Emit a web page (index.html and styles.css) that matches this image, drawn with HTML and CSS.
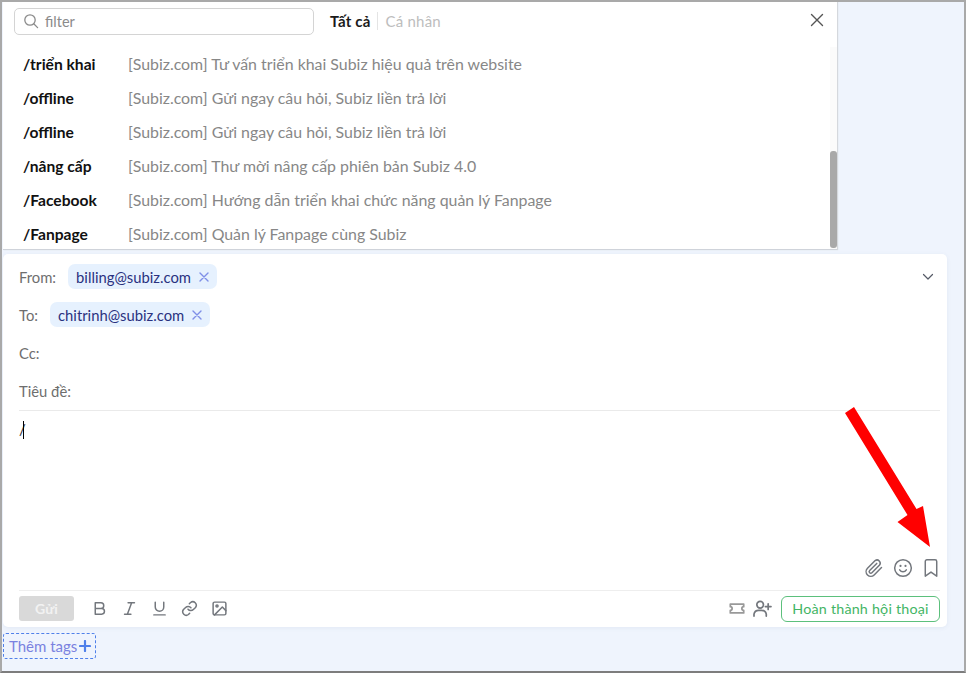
FILE: index.html
```html
<!DOCTYPE html>
<html lang="en">
<head>
    <meta charset="UTF-8">
    <title>Subiz composer</title>
    <link rel="stylesheet" href="styles.css">
</head>
<body>
    <div class="frame">
        <div class="template-box">
            <div class="template-head">
                <div class="filter">
                    <svg class="filter-icon" width="16" height="16" viewBox="0 0 16 16"><circle cx="7" cy="7" r="5.2"/><path d="M11 11l3.6 3.6"/></svg>
                    <span>filter</span>
                </div>
                <div class="tabs">
                    <span class="tab active">Tất cả</span>
                    <span class="tab">Cá nhân</span>
                </div>
                <svg class="close-icon" width="14" height="14" viewBox="0 0 14 14"><path d="M1.5 1.5l11 11M12.5 1.5l-11 11"/></svg>
            </div>
            <div class="template-body">
                <div class="template-list">
                    <div class="row"><b>/triển khai</b><span>[Subiz.com] Tư vấn triển khai Subiz hiệu quả trên website</span></div>
                    <div class="row"><b>/offline</b><span>[Subiz.com] Gửi ngay câu hỏi, Subiz liền trả lời</span></div>
                    <div class="row"><b>/offline</b><span>[Subiz.com] Gửi ngay câu hỏi, Subiz liền trả lời</span></div>
                    <div class="row"><b>/nâng cấp</b><span>[Subiz.com] Thư mời nâng cấp phiên bản Subiz 4.0</span></div>
                    <div class="row"><b>/Facebook</b><span>[Subiz.com] Hướng dẫn triển khai chức năng quản lý Fanpage</span></div>
                    <div class="row"><b>/Fanpage</b><span>[Subiz.com] Quản lý Fanpage cùng Subiz</span></div>
                </div>
                <div class="scrollbar"><div class="thumb"></div></div>
            </div>
        </div>

        <div class="composer">
            <div class="field">
                <label>From:</label>
                <span class="chip">billing@subiz.com <svg width="10" height="10" viewBox="0 0 10 10"><path d="M1 1l8 8M9 1l-8 8"/></svg></span>
                <svg class="chevron" width="12" height="8" viewBox="0 0 12 8"><path d="M1.5 1.5L6 6l4.5-4.5"/></svg>
            </div>
            <div class="field">
                <label>To:</label>
                <span class="chip">chitrinh@subiz.com <svg width="10" height="10" viewBox="0 0 10 10"><path d="M1 1l8 8M9 1l-8 8"/></svg></span>
            </div>
            <div class="field"><label>Cc:</label></div>
            <div class="field"><label>Tiêu đề:</label></div>
            <div class="editor">
                <div class="typed">/<i class="caret"></i></div>
                <div class="editor-icons">
                    <svg width="20" height="20" viewBox="0 0 24 24"><path d="M21 11.5l-8.8 8.8a5.6 5.6 0 0 1-8-8l9.2-9.2a3.8 3.8 0 0 1 5.3 5.3l-9.2 9.2a1.9 1.9 0 0 1-2.7-2.7l8.5-8.4"/></svg>
                    <svg width="20" height="20" viewBox="0 0 24 24"><circle cx="12" cy="12" r="10"/><path d="M8 14.2s1.500 2.300 4 2.300 4-2.300 4-2.300"/><path d="M9 9.500h.01M15 9.500h.01" stroke-width="2.600"/></svg>
                    <svg width="18" height="20" viewBox="0 0 22 24"><path d="M18 22l-7-5-7 5V4a2 2 0 0 1 2-2h10a2 2 0 0 1 2 2z"/></svg>
                </div>
            </div>
            <div class="toolbar">
                <button class="send">Gửi</button>
                <div class="format-icons">
                    <svg width="17" height="17" viewBox="0 0 24 24"><path d="M6 4h8a4 4 0 0 1 0 8H6zM6 12h9a4 4 0 0 1 0 8H6z"/></svg>
                    <svg width="17" height="17" viewBox="0 0 24 24"><path d="M19 4h-9M14 20H5M15 4L9 20"/></svg>
                    <svg width="17" height="17" viewBox="0 0 24 24"><path d="M6 3v7a6 6 0 0 0 12 0V3M4 21h16"/></svg>
                    <svg width="17" height="17" viewBox="0 0 24 24"><path d="M10 13a5 5 0 0 0 7.500.500l3-3a5 5 0 0 0-7-7l-1.700 1.700"/><path d="M14 11a5 5 0 0 0-7.500-.500l-3 3a5 5 0 0 0 7 7l1.700-1.700"/></svg>
                    <svg width="17" height="17" viewBox="0 0 24 24"><rect x="3" y="3" width="18" height="18" rx="2"/><circle cx="8.500" cy="8.500" r="1.500"/><path d="M21 15l-5-5L5 21"/></svg>
                </div>
                <div class="actions">
                    <svg class="ticket" width="16" height="13" viewBox="0 0 18 14"><path d="M1.500 2h15v3a2 2 0 0 0 0 4v3h-15V9a2 2 0 0 0 0-4z"/></svg>
                    <svg width="19" height="17" viewBox="0 0 20 18"><circle cx="7.500" cy="5" r="3.500"/><path d="M1 17v-2a5 5 0 0 1 5-4h3a5 5 0 0 1 5 4v2M16 4v6M13 7h6"/></svg>
                    <button class="finish">Hoàn thành hội thoại</button>
                </div>
            </div>
        </div>

        <div class="tags-row">
            <span class="add-tags">Thêm tags<svg width="12" height="12" viewBox="0 0 12 12"><path d="M6 1v10M1 6h10"/></svg></span>
        </div>

        <svg class="arrow" width="100" height="150" viewBox="0 0 100 150"><path d="M5 13L14 7L76.500 109L83 106L90 147L57.500 122L67.500 115z"/></svg>
    </div>
</body>
</html>
```

FILE: styles.css
```css
* {
    box-sizing: border-box;
}

body {
    margin: 0;
    font-family: Lato, "Open Sans", sans-serif;
    background-color: #eff4fd;
}

.frame {
    position: relative;
    width: 966px;
    height: 673px;
    border-top: 2px solid #a9a9a9;
    border-left: 2px solid #a9a9a9;
    border-right: 2px solid #a9a9a9;
    border-bottom: 2px solid #7d7d7d;
    padding-left: 1px;
    overflow: hidden;
}

svg {
    fill: none;
    stroke: #73777d;
    stroke-width: 1.8;
    stroke-linecap: round;
    stroke-linejoin: round;
    flex: none;
}

/* template popup */
.template-box {
    width: 834px;
    height: 248px;
    background-color: #fff;
    border-bottom: 1px solid #cfd3da;
    box-shadow: 1px 0 1px #d5d8dd;
}

.template-head {
    display: flex;
    align-items: center;
    height: 45px;
    padding: 6px 0 13px 11px;
}

.filter {
    display: flex;
    align-items: center;
    gap: 6px;
    width: 300px;
    height: 27px;
    padding-left: 8px;
    border: 1px solid #d4d4d4;
    border-radius: 5px;
    font-size: 14.500px;
    color: #8b8b8b;
}

.filter-icon {
    stroke: #8b8b8b;
    stroke-width: 1.300;
}

.tabs {
    display: flex;
    align-items: center;
    margin-left: 16px;
    font-size: 15px;
    letter-spacing: .2px;
}

.tab {
    color: #bdbdbd;
}

.tab.active {
    padding-right: 6px;
    margin-right: 8px;
    border-right: 1px solid #e4e4e4;
    color: #1b1b1b;
    font-weight: bold;
}

.close-icon {
    margin-left: auto;
    margin-right: 13px;
    margin-top: -2px;
    stroke: #555;
    stroke-width: 1.400;
}

.template-body {
    display: flex;
    height: 202px;
}

.template-list {
    flex: 1;
    padding-left: 20px;
}

.row {
    display: flex;
    align-items: center;
    height: 34px;
    font-size: 15.900px;
    color: #878787;
}

.row span {
    margin-bottom: 2px;
}

.row b {
    width: 105px;
    flex: none;
    font-size: 15.600px;
    color: #111;
}

.scrollbar {
    width: 7px;
    padding-top: 104px;
    background-color: #fbfbfb;
}

.thumb {
    height: 97px;
    border-radius: 3px;
    background-color: #a9a9a9;
}

/* composer */
.composer {
    display: flex;
    flex-direction: column;
    width: 944px;
    height: 373px;
    margin-top: 4px;
    padding: 4px 7px 0 16px;
    background-color: #fff;
    border-radius: 5px;
    box-shadow: 0 1px 4px rgba(80, 100, 140, .08);
}

.field {
    display: flex;
    align-items: center;
    height: 38px;
    font-size: 14.800px;
    color: #6e6e6e;
}

.field label {
    margin-right: 12px;
}

.chip {
    display: flex;
    align-items: center;
    gap: 8px;
    height: 25px;
    margin-bottom: 1px;
    padding: 0 8px;
    border-radius: 7px;
    background-color: #e6f1fe;
    font-size: 14.800px;
    color: #2a3180;
}

.chip svg {
    stroke: #7f8fe8;
    stroke-width: 1.400;
}

.chevron {
    margin-left: auto;
    margin-right: 6px;
    stroke: #555a66;
    stroke-width: 1.200;
}

.editor {
    display: flex;
    flex-direction: column;
    justify-content: space-between;
    height: 180px;
    border-top: 1px solid #eaeaea;
    padding-bottom: 12px;
}

.typed {
    position: relative;
    padding-top: 9px;
    font-size: 15px;
    color: #333;
}

.caret {
    position: absolute;
    left: 4px;
    top: 10px;
    width: 1px;
    height: 18px;
    background-color: #000;
}

.editor-icons {
    display: flex;
    justify-content: flex-end;
    align-items: center;
    gap: 9px;
}

.toolbar {
    display: flex;
    align-items: center;
    height: 36px;
    border-top: 1px solid #eeeeee;
}

.send {
    width: 55px;
    height: 25px;
    border: none;
    border-radius: 3px;
    background-color: #d9d9d9;
    color: #f2f2f2;
    font-family: inherit;
    font-size: 14px;
    font-weight: bold;
}

.format-icons {
    display: flex;
    gap: 13px;
    margin-left: 17px;
}

.format-icons svg {
    stroke-width: 2.100;
}

.actions {
    display: flex;
    align-items: center;
    gap: 8px;
    margin-left: auto;
}

.ticket {
    stroke: #999;
    stroke-width: 2;
}

.finish {
    width: 159px;
    height: 26px;
    margin-left: 1px;
    padding: 0;
    border: 1px solid #5cc07c;
    border-radius: 6px;
    background-color: #fff;
    color: #43b565;
    font-family: inherit;
    font-size: 14.300px;
    letter-spacing: .2px;
}

/* tags */
.tags-row {
    margin-top: 6px;
}

.add-tags {
    display: inline-flex;
    align-items: center;
    gap: 2px;
    height: 26px;
    padding: 0 4px 0 5px;
    border: 1px dashed #4f80ea;
    border-radius: 3px;
    font-size: 15px;
    color: #7a82e0;
}

.add-tags svg {
    stroke: #4f80ea;
    stroke-width: 2.200;
}

/* annotation on top of the screenshot */
.arrow {
    position: absolute;
    left: 838px;
    top: 398px;
    overflow: visible;
}

.arrow path {
    fill: #ff0000;
    stroke: none;
}
```
